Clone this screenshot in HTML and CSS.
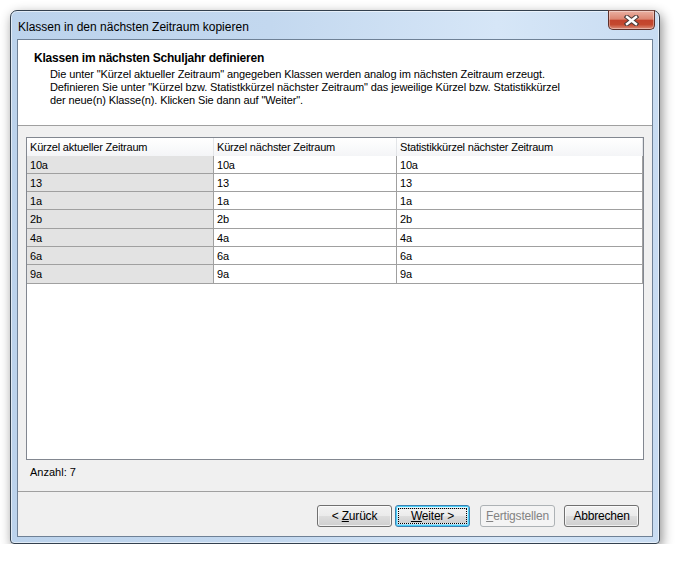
FILE: index.html
```html
<!DOCTYPE html>
<html lang="de">

<head>
	<meta charset="utf-8" />
	<title>Klassen in den nächsten Zeitraum kopieren</title>
	<link rel="stylesheet" href="styles.css">
</head>

<body>
	<div class="window">
		<div class="titlebar">
			<span class="title">Klassen in den nächsten Zeitraum kopieren</span>
			<div class="close" title="Schließen">
				<svg width="15" height="11" viewBox="0 0 15 11">
					<path d="M3 2 L12 9 M12 2 L3 9" stroke="#4a3c3a" stroke-width="4.6" stroke-linecap="square" />
					<path d="M3 2 L12 9 M12 2 L3 9" stroke="#fff" stroke-width="2.4" stroke-linecap="square" />
				</svg>
			</div>
		</div>
		<div class="client">
			<div class="header">
				<h1>Klassen im nächsten Schuljahr definieren</h1>
				<p>Die unter "Kürzel aktueller Zeitraum" angegeben Klassen werden analog im nächsten Zeitraum erzeugt.<br>
					Definieren Sie unter "Kürzel bzw. Statistkkürzel nächster Zeitraum" das jeweilige Kürzel bzw. Statistikkürzel<br>
					der neue(n) Klasse(n). Klicken Sie dann auf "Weiter".</p>
			</div>
			<div class="content">
				<div class="grid">
					<div class="row head">
						<div class="cell">Kürzel aktueller Zeitraum</div>
						<div class="cell">Kürzel nächster Zeitraum</div>
						<div class="cell">Statistikkürzel nächster Zeitraum</div>
					</div>
					<div class="row">
						<div class="cell">10a</div>
						<div class="cell">10a</div>
						<div class="cell">10a</div>
					</div>
					<div class="row">
						<div class="cell">13</div>
						<div class="cell">13</div>
						<div class="cell">13</div>
					</div>
					<div class="row">
						<div class="cell">1a</div>
						<div class="cell">1a</div>
						<div class="cell">1a</div>
					</div>
					<div class="row">
						<div class="cell">2b</div>
						<div class="cell">2b</div>
						<div class="cell">2b</div>
					</div>
					<div class="row">
						<div class="cell">4a</div>
						<div class="cell">4a</div>
						<div class="cell">4a</div>
					</div>
					<div class="row">
						<div class="cell">6a</div>
						<div class="cell">6a</div>
						<div class="cell">6a</div>
					</div>
					<div class="row">
						<div class="cell">9a</div>
						<div class="cell">9a</div>
						<div class="cell">9a</div>
					</div>
				</div>
				<div class="count">Anzahl: 7</div>
			</div>
			<div class="footer">
				<button class="btn"><span>&lt; <u>Z</u>urück</span></button>
				<button class="btn default"><span class="focus"><span><u>W</u>eiter &gt;</span></span></button>
				<button class="btn disabled"><span><u>F</u>ertigstellen</span></button>
				<button class="btn"><span>Abbrechen</span></button>
			</div>
		</div>
	</div>
</body>

</html>
```

FILE: styles.css
```css
* {
	margin: 0px;
	padding: 0px;
	box-sizing: border-box;
}

body {
	background: #fff;
	font-family: "Liberation Sans", Arial, sans-serif;
	font-size: 12px;
	color: #000;
	padding: 10px 0 0 10px;
}

/*窗口外框*/
.window {
	width: 650px;
	border: 1px solid #33404e;
	border-radius: 7px 7px 4px 4px;
	padding: 0 6px 6px 6px;
	background-image: linear-gradient(to right, #bcd3ec, #c3d8ef 40%, #d6e6f7 75%, #c8dcf2);
	box-shadow: inset 0 0 0 1px rgba(255, 255, 255, .55), 2px 4px 12px rgba(0, 0, 0, .45);
}

.titlebar {
	height: 28px;
	display: flex;
	justify-content: space-between;
	align-items: flex-start;
}

.title {
	padding: 9px 0 0 1px;
	line-height: 15px;
	color: #000;
}

/*关闭按钮*/
.close {
	width: 47px;
	height: 20px;
	margin: -1px -2px 0 0;
	border: 1px solid #5d302a;
	border-top-color: #7a4a42;
	border-radius: 0 0 5px 5px;
	background-image: linear-gradient(to bottom, #eab0a2, #dc8571 45%, #c2432c 52%, #c4492f 75%, #dc8d78);
	box-shadow: inset 0 0 0 1px rgba(255, 255, 255, .35);
	display: flex;
	align-items: center;
	justify-content: center;
}

.client {
	height: 498px;
	border: 1px solid #6f8196;
	background: #f0f0f0;
	display: flex;
	flex-direction: column;
}

.header {
	height: 86px;
	background: #fff;
	border-bottom: 1px solid #a0a0a0;
	padding: 11px 0 0 16px;
}

.header h1 {
	font-size: 12px;
	line-height: 15px;
	font-weight: bold;
	letter-spacing: -0.2px;
}

.header p {
	margin-top: 2px;
	padding-left: 16px;
	font-size: 11px;
	line-height: 13px;
	letter-spacing: -0.1px;
}

.content {
	flex: 1;
	padding: 11px 8px 0 8px;
	display: flex;
	flex-direction: column;
}

/*表格*/
.grid {
	height: 323px;
	border: 1px solid #828790;
	background: #fff;
	font-size: 11px;
	letter-spacing: -0.2px;
}

.row {
	display: grid;
	grid-template-columns: 187px 183px 246px;
	height: 18.33px;
}

.row .cell {
	border-right: 1px solid #a0a0a0;
	border-bottom: 1px solid #a0a0a0;
	padding: 3px 0 0 3px;
	line-height: 13px;
	white-space: nowrap;
	overflow: hidden;
}

.row .cell:first-child {
	background: #e3e3e3;
}

.row.head {
	height: 17.5px;
	background-image: linear-gradient(to bottom, #fff, #f4f5f7);
}

.row.head .cell {
	background: none;
	border-bottom: none;
	border-right-color: #e3e5e8;
	padding-top: 3px;
}

.count {
	height: 31px;
	padding: 5px 0 0 4px;
	line-height: 15px;
	font-size: 11px;
}

.footer {
	height: 45px;
	border-top: 1px solid #a0a0a0;
	display: flex;
	justify-content: flex-end;
	align-items: flex-start;
	padding: 13px 13px 0 0;
}

/*按钮*/
.btn {
	width: 75px;
	height: 22px;
	margin-left: 9px;
	border: 1px solid #707070;
	border-radius: 3px;
	font-family: inherit;
	font-size: 12px;
	letter-spacing: -0.2px;
	color: #000;
	background-image: linear-gradient(to bottom, #f2f2f2, #ebebeb 48%, #dddddd 52%, #cfcfcf);
	box-shadow: inset 0 0 0 1px rgba(255, 255, 255, .7);
	display: flex;
	align-items: center;
	justify-content: center;
}

.btn:first-child {
	margin-left: 0;
}

.btn.default {
	margin-left: 3px;
	border-color: #3c7fb1;
	padding: 2px;
	background-image: linear-gradient(to bottom, #eaf6fd, #d9f0fc 48%, #bee6fd 52%, #a7d9f5);
	box-shadow: inset 0 0 0 1px #48d0f7;
}

.btn .focus {
	display: flex;
	align-items: center;
	justify-content: center;
	width: 100%;
	height: 100%;
	border: 1px dotted #000;
	background-image: linear-gradient(to bottom, #f2f2f2, #ebebeb 48%, #dddddd 52%, #cfcfcf);
}

.btn.disabled {
	margin-left: 10px;
	border-color: #adb2b5;
	color: #838383;
	background: #f4f4f4;
	box-shadow: none;
}
```
